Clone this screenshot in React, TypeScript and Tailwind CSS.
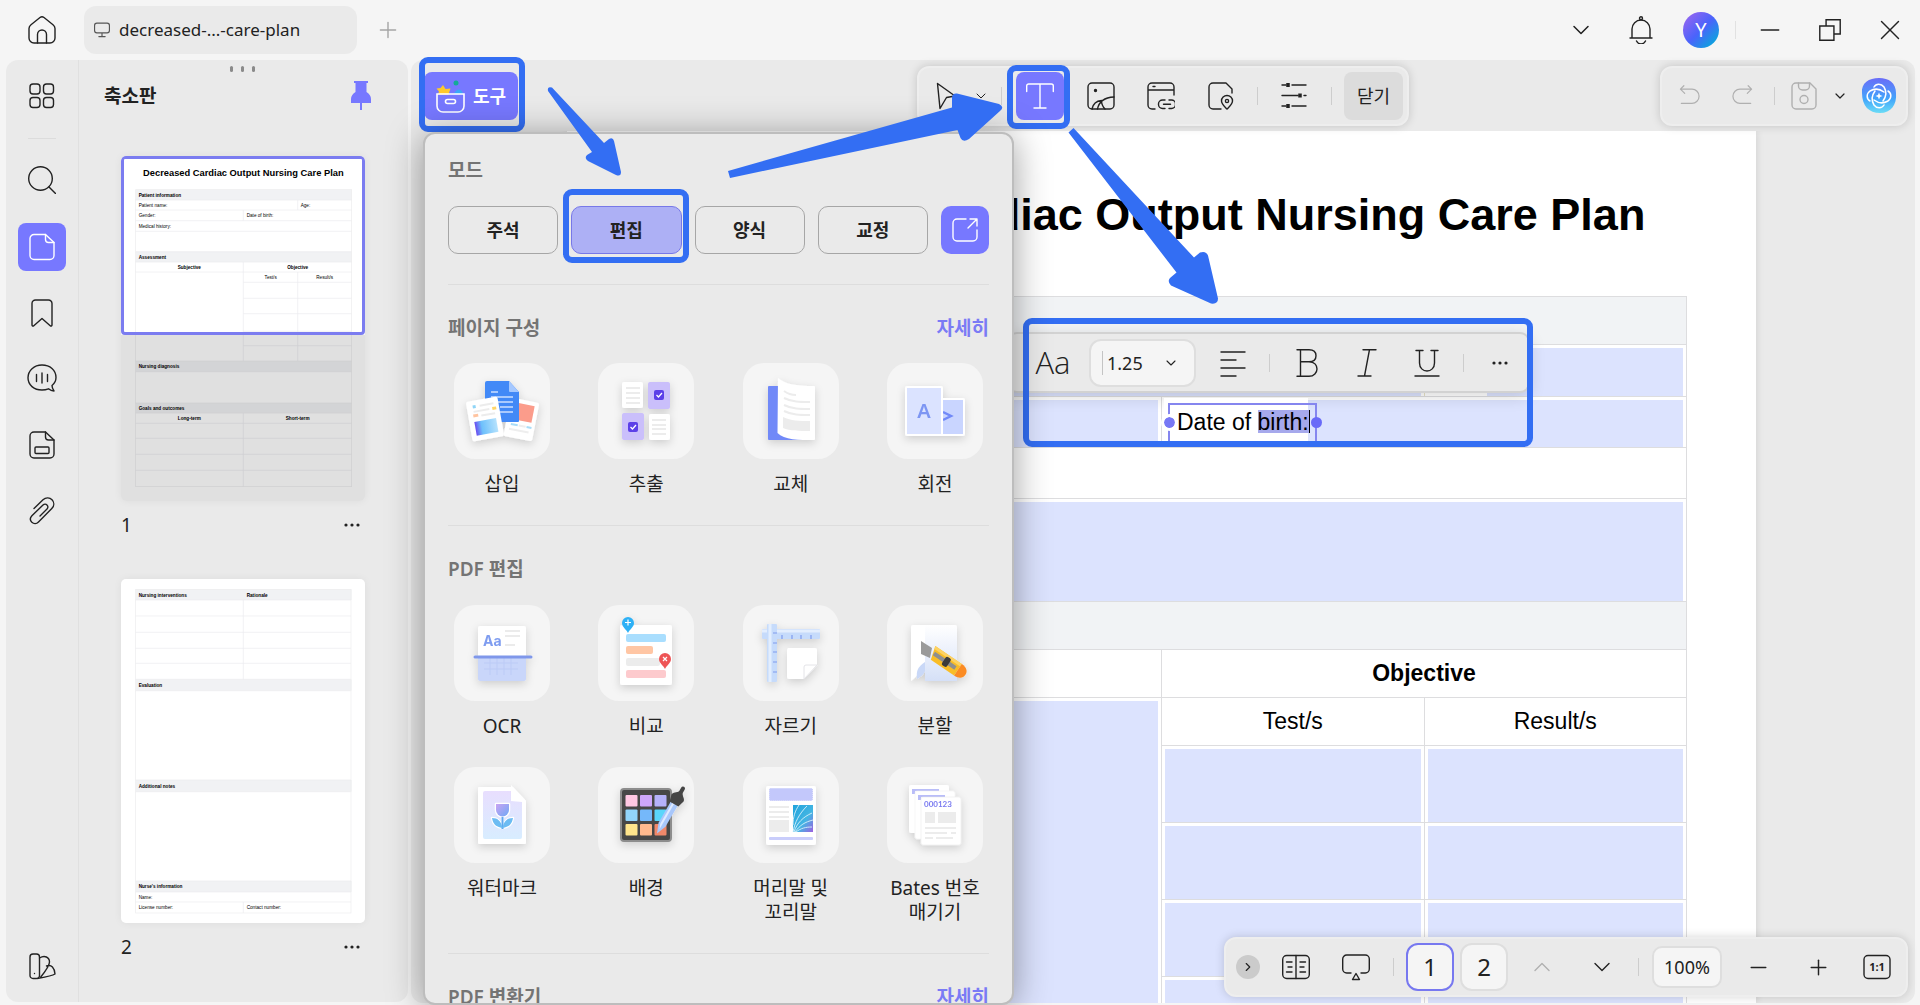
import React from 'react';
import { ChevronDown, ChevronRight, ChevronUp, Minus, Plus, X } from 'lucide-react';

const Icon = ({ size = 28, children, className = '' }: { size?: number; children: React.ReactNode; className?: string }) => (
  <svg
    width={size}
    height={size}
    viewBox="0 0 28 28"
    fill="none"
    stroke="currentColor"
    strokeWidth="1.4"
    strokeLinecap="round"
    strokeLinejoin="round"
    className={`shrink-0 ${className}`}
    aria-hidden="true"
  >
    {children}
  </svg>
);

const Dots = () => (
  <svg width="16" height="4" viewBox="0 0 16 4" fill="currentColor" aria-hidden="true">
    <circle cx="2" cy="2" r="1.6" />
    <circle cx="8" cy="2" r="1.6" />
    <circle cx="14" cy="2" r="1.6" />
  </svg>
);

const Divider = ({ className = '' }: { className?: string }) => (
  <span className={`flex shrink-0 justify-center ${className}`}>
    <span className="h-[18px] w-px bg-[#cdcdcd]" />
  </span>
);

// Highlight frame drawn round a control
const Frame = ({ className }: { className: string }) => (
  <span className={`pointer-events-none absolute rounded-[9px] border-[6px] border-[#336ef3] ${className}`} />
);

const railIcons = [
  {
    label: 'Pages',
    active: true,
    icon: (
      <>
        <path d="M17.5 1.5H6a4 4 0 0 0-4 4v17a4 4 0 0 0 4 4h16a4 4 0 0 0 4-4V9.5L17.5 1.5z" />
        <path d="M17.5 1.5v5a3 3 0 0 0 3 3H26" />
      </>
    ),
  },
  { label: 'Bookmarks', icon: <path d="M4 4.5a3.5 3.5 0 0 1 3.5-3.500h13A3.500 3.500 0 0 1 24 4.500V26c0 1-1 1.400-1.800.700L14 19.500l-8.200 7.200C5 27.400 4 27 4 26z" /> },
  {
    label: 'Comments',
    icon: (
      <>
        <path d="M24 20.500C27 18 28 15.500 28 12.500 28 5 22 0 14 0S0 5.500 0 12.800 6 25 14 25c2.500 0 4.500-.4 6.500-1.200 1.500 1.300 3.500 2.200 5.500 2.200-1-1.500-2-3.500-2-5.500z" />
        <path d="M8.500 9.500v7M14 8v10M19.500 9.500v7" />
      </>
    ),
  },
  {
    label: 'Fields',
    icon: (
      <>
        <path d="M17.500 1H6a4 4 0 0 0-4 4v18a4 4 0 0 0 4 4h16a4 4 0 0 0 4-4V9L17.500 1z" />
        <path d="M17.500 1v5a3 3 0 0 0 3 3H26" />
        <rect x="7" y="16" width="14" height="6.500" rx="1" />
      </>
    ),
  },
  {
    label: 'Attachments',
    icon: <path d="M6 11.500 15 2.800c3-2.800 6.800-2.300 9 0 2.300 2.400 2.500 6-.2 8.800L10.500 25c-2 2-4.800 2-6.600.3-1.900-1.900-1.900-4.600 0-6.600L15 8c1.200-1.200 3-1.200 4 0 1.200 1.100 1.200 2.800 0 4l-7 7" />,
  },
];

const modes = ['주석', '편집', '양식', '교정'];

/* ---- page thumbnails ---- */

const lineColor = '#ececee';

const ThumbOne = () => (
  <svg viewBox="0 0 732 1035" className="block w-full" fontFamily="Liberation Sans, sans-serif" fontSize="14" role="img" aria-label="Page 1">
    <rect width="732" height="1035" fill="#fff" />
    <text x="367" y="60" fontSize="28" fontWeight="700" textAnchor="middle">Decreased Cardiac Output Nursing Care Plan</text>
    {[[101, 31], [287, 31], [615, 32], [741, 30]].map(([y, h]) => (
      <rect key={y} x="44" y={y} width="648" height={h} fill="#f1f2f4" />
    ))}
    <g stroke={lineColor} strokeWidth="2" fill="none">
      <rect x="44" y="101" width="648" height="891" />
      <path d="M44 132h648M44 162h648M44 194h648M44 226h648M44 287h648M44 318h648M44 348h648M367 379h325M367 427h325M367 473h325M367 526h325M367 569h325M44 615h648M44 647h648M44 741h648M44 771h648M44 802h648M44 847h648M44 895h648M44 943h648" />
      <path d="M530 132v30M367 162v32M367 318v297M530 348v267M367 771v221" />
    </g>
    <g fontWeight="700">
      <text x="53" y="122">Patient information</text>
      <text x="53" y="309">Assessment</text>
      <text x="205" y="339" textAnchor="middle">Subjective</text>
      <text x="530" y="339" textAnchor="middle">Objective</text>
      <text x="53" y="636">Nursing diagnosis</text>
      <text x="53" y="761">Goals and outcomes</text>
      <text x="205" y="791" textAnchor="middle">Long-term</text>
      <text x="530" y="791" textAnchor="middle">Short-term</text>
    </g>
    <text x="53" y="152">Patient name:</text>
    <text x="539" y="152">Age:</text>
    <text x="53" y="184">Gender:</text>
    <text x="377" y="184">Date of birth:</text>
    <text x="53" y="215">Medical history:</text>
    <text x="449" y="368" textAnchor="middle">Test/s</text>
    <text x="611" y="368" textAnchor="middle">Result/s</text>
    <rect y="536" width="732" height="499" fill="#000" fillOpacity="0.12" />
  </svg>
);

const ThumbTwo = () => (
  <svg viewBox="0 0 732 1033" className="block w-full" fontFamily="Liberation Sans, sans-serif" fontSize="14" role="img" aria-label="Page 2">
    <rect width="732" height="1033" fill="#fff" />
    {[[31, 32], [301, 34], [603, 35], [906, 33]].map(([y, h]) => (
      <rect key={y} x="44" y={y} width="648" height={h} fill="#f1f2f4" />
    ))}
    <g stroke={lineColor} strokeWidth="2" fill="none">
      <rect x="44" y="31" width="646" height="971" />
      <path d="M44 63h646M44 111h646M44 160h646M44 208h646M44 253h646M44 301h646M44 335h646M44 603h646M44 638h646M44 906h646M44 939h646M44 969h646" />
      <path d="M367 63v238M367 969v33" />
    </g>
    <g fontWeight="700">
      <text x="53" y="53">Nursing interventions</text>
      <text x="377" y="53">Rationale</text>
      <text x="53" y="323">Evaluation</text>
      <text x="53" y="626">Additional notes</text>
      <text x="53" y="928">Nurse's information</text>
    </g>
    <text x="53" y="959">Name:</text>
    <text x="53" y="991">License number:</text>
    <text x="377" y="991">Contact number:</text>
  </svg>
);

/* ---- tool tile drawings, all on a 96 x 96 tile ---- */

const InsertArt = () => (
  <>
    <g transform="rotate(11 68 56)">
      <rect x="53" y="37" width="29" height="39" rx="2" fill="#fff" />
      <rect x="58" y="41" width="20" height="17" fill="#fb9c8b" />
      <path d="M58 63h7M74 63h5" stroke="#a8dcf8" strokeWidth="2" />
      <path d="M66 63h7M57 68h20" stroke="#eee" strokeWidth="2" />
    </g>
    <path d="M33 18h22l10 11v29a1 1 0 0 1-1 1H32a1 1 0 0 1-1-1V20a2 2 0 0 1 2-2z" fill="#4289f7" />
    <path d="M55 18l10 11H56a1 1 0 0 1-1-1z" fill="#a5c8ff" />
    <path d="M37 29h7M37 34h22M37 39h22M46 44h13M46 49h13" stroke="#a9c9fd" strokeWidth="2" />
    <g transform="rotate(-10 31 56)">
      <rect x="15" y="36" width="32" height="40" rx="2" fill="#fff" />
      <path d="M21 42h3" stroke="#8fd5f7" strokeWidth="3" />
      <path d="M28 42h14M21 47h16M28 52h14" stroke="#ececec" strokeWidth="2" />
      <path d="M40 47h4" stroke="#ffd669" strokeWidth="3" />
      <path d="M20 51h5" stroke="#ffc4a0" strokeWidth="3" />
      <rect x="20" y="57" width="22" height="14" fill="url(#gSky)" />
    </g>
  </>
);

const ExtractArt = () => (
  <>
    <rect x="24" y="19" width="21" height="26" rx="2" fill="#fff" />
    <rect x="51" y="51" width="21" height="26" rx="2" fill="#fff" />
    <rect x="50" y="19" width="22" height="27" rx="2" fill="#cabffb" />
    <rect x="24" y="50" width="22" height="27" rx="2" fill="#cabffb" />
    <path d="M28 25h14M28 30h14M28 35h14M28 40h14M54 57h14M54 62h14M54 66h14M54 71h14" stroke="#ececec" strokeWidth="2" />
    <rect x="56" y="27" width="10" height="10" rx="2" fill="#5b3fe8" />
    <rect x="30" y="59" width="10" height="10" rx="2" fill="#5b3fe8" />
    <path d="M58.500 32l2 2 3.500-4M32.500 64l2 2 3.500-4" stroke="#fff" strokeWidth="1.300" fill="none" />
  </>
);

const ReplaceArt = () => (
  <>
    <rect x="25" y="23" width="36" height="54" rx="1" fill="#7189f8" />
    <path d="M35 15c7 6 17 8 36 8a1 1 0 0 1 1 1v52a1 1 0 0 1-1 1c-15 0-30 0-36.500-7z" fill="#fff" />
    <path d="M41 28c4 3 8 4 12 4M41 35c8 4 16 4 26 4M41 42c8 4 16 4 26 4M41 48c8 4 16 4 26 4" stroke="#ececec" strokeWidth="2" fill="none" />
    <path d="M40 54c8 4 16 4 27 4v10c-11 0-20 0-27-3z" fill="#ececec" />
  </>
);

const RotateArt = () => (
  <>
    <rect x="45" y="36" width="32" height="36" rx="1" fill="#c9d5ff" stroke="#fff" strokeWidth="2" />
    <path d="M56 49l8 4-8 4" fill="none" stroke="#7189f8" strokeWidth="2.500" />
    <rect x="19" y="24" width="36" height="48" rx="1" fill="#dbe3ff" stroke="#fff" strokeWidth="2" />
    <text x="37" y="55" fontSize="20" fontWeight="600" textAnchor="middle" fill="#7d96f3">A</text>
  </>
);

const OcrArt = () => (
  <>
    <rect x="24" y="21" width="48" height="34" rx="2" fill="#fff" />
    <text x="29" y="41" fontSize="14" fontWeight="700" fill="#7f9df0" fontFamily="Inter, sans-serif">Aa</text>
    <path d="M51 26h15M51 31h15M51 40h10" stroke="#ebebeb" strokeWidth="2" />
    <path d="M24 52h48v22a2 2 0 0 1-2 2H26a2 2 0 0 1-2-2z" fill="#c9d6fa" />
    <path d="M36 53v17M43 53v17M50 53v17M57 53v17M30 58h34M30 64h34" stroke="#bccbf6" strokeWidth="1" />
    <path d="M21 52h56" stroke="#7f97ea" strokeWidth="3" strokeLinecap="round" />
  </>
);

const CompareArt = () => (
  <>
    <rect x="22" y="20" width="52" height="60" rx="2" fill="#fff" />
    <rect x="28" y="29" width="40" height="8" rx="2" fill="#a9defe" />
    <rect x="28" y="41" width="27" height="8" rx="2" fill="#ffc6a4" />
    <rect x="28" y="53" width="34" height="8" rx="2" fill="#ececec" />
    <rect x="28" y="65" width="40" height="8" rx="2" fill="#fdcacd" />
    <path d="M30 28c-2-4-6-6-6-10a6 6 0 0 1 12 0c0 4-4 6-6 10z" fill="#2fb1f6" />
    <path d="M30 14.500v6M27 17.500h6" stroke="#fff" strokeWidth="1.200" />
    <path d="M67 64c-2-4-6-6-6-10a6 6 0 0 1 12 0c0 4-4 6-6 10z" fill="#ee5456" />
    <path d="M65 52l4 4M69 52l-4 4" stroke="#fff" strokeWidth="1.200" />
  </>
);

const CropArt = () => (
  <>
    <rect x="19" y="24" width="58" height="10" rx="1" fill="#c6dbfb" />
    <path d="M19 26h58" stroke="#e3eefe" strokeWidth="3" />
    <path d="M39 30v4M49 30v4M58 30v4M68 30v4" stroke="#7f9bee" strokeWidth="1.200" />
    <rect x="24" y="19" width="10" height="58" rx="1" fill="#c6dbfb" />
    <path d="M27 19v58" stroke="#e3eefe" strokeWidth="3" />
    <path d="M30 28h4M30 38h4M30 47h4M30 57h4M30 67h4" stroke="#7f9bee" strokeWidth="1.200" />
    <path d="M45 43h27a2 2 0 0 1 2 2v15L61 74H46a2 2 0 0 1-2-2V45z" fill="#fff" />
    <path d="M74 60L61 74V62a2 2 0 0 1 2-2z" fill="#fff" stroke="#e4e4e8" strokeWidth="1" />
  </>
);

const SplitArt = () => (
  <>
    <path d="M26 20h12v40c-3 4-6 10-14 16V22a2 2 0 0 1 2-2z" fill="#fff" />
    <path d="M38 20h30a2 2 0 0 1 2 2v54H38z" fill="url(#gPaper)" />
    <path d="M38 57c-7 5-9 8-8 17 5-3 8-6 8-9z" fill="#c9d8f7" />
    <path d="M34 36l11 7-2 10-9-4z" fill="#9a9a9a" />
    <g transform="rotate(34 61 58)">
      <path d="M41 51h32v14H45z" fill="#f9bd27" />
      <path d="M41 51h32v3H42z" fill="#fdd264" />
      <path d="M73 51c6 0 9 3 9 7s-3 7-9 7z" fill="#fb8b24" />
      <path d="M44 58h26" stroke="#8f8f8f" strokeWidth="4" />
      <rect x="56" y="53" width="6" height="10" rx="2" fill="#3a3a3a" />
    </g>
  </>
);

const WatermarkArt = () => (
  <>
    <path d="M24 21a1 1 0 0 1 1-1h34l13 14v42a1 1 0 0 1-1 1H25a1 1 0 0 1-1-1z" fill="#fff" />
    <path d="M31 24h26v10l11 1v35a2 2 0 0 1-2 2H31a2 2 0 0 1-2-2V26a2 2 0 0 1 2-2z" fill="url(#gWash)" />
    <path d="M57 18l15 16H59a2 2 0 0 1-2-2z" fill="#fff" />
    <g stroke="#fff" strokeWidth="2.500" strokeLinejoin="round">
      <path d="M48.500 50v12M38 51c6 0 9 3 10.500 10C42 60 39 57 38 51zM59 51c-6 0-9 3-10.500 10C55 60 58 57 59 51z" fill="#fff" />
      <path d="M42 37h13v6a6.500 6.500 0 0 1-13 0z" fill="#fff" />
    </g>
    <path d="M48.500 50v12" stroke="#5fa8ee" strokeWidth="2" />
    <path d="M38 51c6 0 9 3 10.500 10C42 60 39 57 38 51zM59 51c-6 0-9 3-10.500 10C55 60 58 57 59 51z" fill="#6cbcf3" />
    <path d="M42 37h13v6a6.500 6.500 0 0 1-13 0z" fill="url(#gTulip)" />
  </>
);

const swatches = [
  ['#ffc8e3', '#cda6fb', '#b5b1fa'],
  ['#92d4fb', '#74b8fa', '#5ad6fb'],
  ['#ffe58c', '#ffb98e', '#f0886a'],
];

const BackgroundArt = () => (
  <>
    <rect x="23" y="22" width="50" height="52" rx="3" fill="#464646" stroke="#8d8d8d" strokeWidth="2" />
    {swatches.map((row, r) =>
      row.map((fill, c) => <rect key={fill} x={27.5 + c * 14.5} y={28 + r * 14.5} width="12" height="11.500" rx="1" fill={fill} />)
    )}
    <g transform="rotate(30 72 44)">
      <path d="M68 36h8v24l-4 10-4-10z" fill="#a8c7fb" />
      <path d="M70 36h2v29l-2-5z" fill="#dfeaff" />
      <path d="M65 29c0-3 4-4 5-7v-4a2 2 0 0 1 4 0v4c1 3 5 4 5 7l-2 7H67z" fill="#444" />
    </g>
  </>
);

const HeaderFooterArt = () => (
  <>
    <rect x="23" y="19" width="50" height="59" rx="2" fill="#fff" />
    <rect x="26.500" y="21.500" width="43" height="12" rx="1" fill="#c3c8fb" stroke="#a7adf5" strokeWidth="0.500" strokeDasharray="1 1" />
    <path d="M26 40h20M26 45h20M26 50h20" stroke="#ececec" strokeWidth="2" />
    <rect x="26" y="53" width="20" height="12" fill="#ececec" />
    <rect x="50" y="38" width="20" height="27" fill="url(#gFeather)" />
    <path d="M50 65c2-10 6-18 14-26M51 65c3-9 9-15 18-19M52 65c5-7 10-10 18-12M53 65c5-4 10-5 16-5M50 58c0-8 2-14 6-20" stroke="#d8f1fb" strokeWidth="0.900" fill="none" />
    <rect x="26" y="70" width="44" height="3" rx="1" fill="#c9cdfb" />
  </>
);

const BatesArt = () => (
  <>
    <rect x="22" y="18" width="40" height="48" rx="2" fill="#fff" />
    <path d="M25 27v-5h27v2H28v3z" fill="#b9bdf8" />
    <rect x="28" y="24" width="40" height="48" rx="2" fill="#fff" stroke="#ededed" strokeWidth="0.500" />
    <path d="M31 33v-5h27v2H34v3z" fill="#b9bdf8" />
    <rect x="34" y="30" width="40" height="48" rx="2" fill="#fff" stroke="#e6e6e6" strokeWidth="0.500" />
    <text x="37" y="40" fontSize="8" fontWeight="700" fill="#7a7bf0" fontFamily="Lato, sans-serif">000123</text>
    <rect x="38" y="45" width="10" height="11" fill="#ececec" />
    <rect x="51" y="45" width="18" height="11" fill="#ececec" />
    <path d="M38 61h31M38 66h22M64 66h5M38 71h8M49 71h17" stroke="#ececec" strokeWidth="2" />
  </>
);

interface Tool {
  label: string;
  art: React.ReactNode;
}

const pageTools: Tool[] = [
  { label: '삽입', art: <InsertArt /> },
  { label: '추출', art: <ExtractArt /> },
  { label: '교체', art: <ReplaceArt /> },
  { label: '회전', art: <RotateArt /> },
];

const editTools: Tool[] = [
  { label: 'OCR', art: <OcrArt /> },
  { label: '비교', art: <CompareArt /> },
  { label: '자르기', art: <CropArt /> },
  { label: '분할', art: <SplitArt /> },
  { label: '워터마크', art: <WatermarkArt /> },
  { label: '배경', art: <BackgroundArt /> },
  { label: '머리말 및 꼬리말', art: <HeaderFooterArt /> },
  { label: 'Bates 번호 매기기', art: <BatesArt /> },
];

const ToolGrid = ({ tools }: { tools: Tool[] }) => (
  <div className="grid grid-cols-[repeat(4,96px)] justify-between gap-y-[18px] px-[6px]">
    {tools.map((tool) => (
      <button key={tool.label} type="button" className="flex min-h-[144px] flex-col items-center gap-[13px]">
        <svg width="96" height="96" viewBox="0 0 96 96" className="shrink-0 rounded-[21px] bg-[#f5f5f5]" aria-hidden="true">
          <g filter="url(#soft)">{tool.art}</g>
        </svg>
        <span className="text-[19px] leading-[24px] break-keep text-[#222]">{tool.label}</span>
      </button>
    ))}
  </div>
);

const SectionTitle = ({ title, more }: { title: string; more?: boolean }) => (
  <div className="flex h-[24px] items-center justify-between text-[19px] font-semibold text-[#747474]">
    <h2>{title}</h2>
    {more && <a href="#more" className="text-[#7a7bf5]">자세히</a>}
  </div>
);

const ToolMenu = () => (
  <aside className="absolute top-[132px] left-[423px] z-20 h-[calc(100vh-132px)] w-[591px] overflow-hidden rounded-[12px] border-2 border-[#bdbdbd] bg-[#eaeaea] px-[23px] pt-[24px] shadow-[0_4px_36px_rgba(0,0,0,0.38)]">
    <SectionTitle title="모드" />
    <div className="mt-[24px] flex gap-[13px]">
      {modes.map((mode, i) => (
        <span key={mode} className="relative flex flex-1">
          <button
            type="button"
            className={`h-[48px] flex-1 rounded-[10px] border text-[18px] font-semibold text-[#222] ${
              i === 1 ? 'border-[#7778e8] bg-[#adb0f5]' : 'border-[#a6a6a6]'
            }`}
          >
            {mode}
          </button>
          {i === 1 && <Frame className="-top-[17px] -right-[7px] -bottom-[9px] -left-[8px]" />}
        </span>
      ))}
      <button type="button" aria-label="Open" className="flex h-[48px] w-[48px] items-center justify-center rounded-[10px] bg-[#7778ff] text-white">
        <Icon>
          <path d="M15 3H6a4 4 0 0 0-4 4v14a4 4 0 0 0 4 4h16a4 4 0 0 0 4-4v-7M19 3h7v7M26 3l-9 9" />
        </Icon>
      </button>
    </div>
    <hr className="mt-[30px] border-[#dddddd]" />
    <div className="mt-[31px]">
      <SectionTitle title="페이지 구성" more />
      <div className="mt-[23px]">
        <ToolGrid tools={pageTools} />
      </div>
    </div>
    <hr className="mt-[18px] border-[#dddddd]" />
    <div className="mt-[31px]">
      <SectionTitle title="PDF 편집" />
      <div className="mt-[24px]">
        <ToolGrid tools={editTools} />
      </div>
    </div>
    <hr className="mt-[29px] border-[#dddddd]" />
    <div className="mt-[31px]">
      <SectionTitle title="PDF 변환기" more />
    </div>
  </aside>
);

/* ---- document ---- */

const cell = 'border-r border-b border-[#dddddf]';
const field = 'border-r border-b border-[#dddddf] bg-[#dce3fe] shadow-[inset_3px_3px_0_#fff,inset_-3px_0_0_#fff]';

const CarePlanTable = () => (
  <table className="mx-[69px] w-[1051px] table-fixed border-separate border-spacing-0 border-t border-l border-[#dddddf] text-[23px]">
    <colgroup>
      <col className="w-1/2" />
      <col className="w-1/4" />
      <col className="w-1/4" />
    </colgroup>
    <tbody>
      <tr className="h-[48px]"><td colSpan={3} className={`${cell} bg-[#f1f3f5]`} /></tr>
      <tr className="h-[52px]"><td colSpan={2} className={field} /><td className={field} /></tr>
      <tr className="h-[51px]"><td className={field} /><td colSpan={2} className={field} /></tr>
      <tr className="h-[51px]"><td colSpan={3} className={cell} /></tr>
      <tr className="h-[103px]"><td colSpan={3} className={field} /></tr>
      <tr className="h-[48px]"><td colSpan={3} className={`${cell} bg-[#f1f3f5]`} /></tr>
      <tr className="h-[48px]">
        <td className={cell} />
        <th colSpan={2} className={cell}>Objective</th>
      </tr>
      <tr className="h-[48px] text-center">
        <td rowSpan={6} className={field} />
        <td className={cell}>Test/s</td>
        <td className={cell}>Result/s</td>
      </tr>
      {[1, 2, 3, 4, 5].map((n) => (
        <tr key={n} className="h-[77px]"><td className={field} /><td className={field} /></tr>
      ))}
    </tbody>
  </table>
);

const DateOfBirth = () => (
  <div className="absolute top-[267px] left-[597px] h-[48px] w-[144px] bg-white">
    <div className="absolute top-[5px] left-[4px] h-[43px] w-[149px] border-2 border-b-0 border-[#8586ef]" />
    <p className="absolute top-[12px] left-[13px] text-[23px] leading-[24px] whitespace-nowrap">
      Date of <mark className="inline-block h-[23px] border-r border-black bg-[#a6a9ec] text-black">birth:</mark>
    </p>
    <span className="absolute top-[19px] h-[11px] w-[11px] rounded-full bg-[#7778f5] outline-3 outline-white" />
    <span className="absolute top-[19px] left-[147px] h-[11px] w-[11px] rounded-full bg-[#696af8]" />
  </div>
);

const FormatBar = () => (
  <div className="absolute top-[201px] left-[440px] flex h-[61px] items-center rounded-[10px] border-2 border-[#d2d2d2] bg-[#eaeaea] pl-[24px] text-[#222] shadow-[0_4px_16px_rgba(0,0,0,0.15)]">
    <button type="button" className="w-[40px] font-['Open_Sans',sans-serif] text-[31px] font-light">Aa</button>
    <label className="ml-[16px] flex h-[48px] w-[107px] items-center rounded-[12px] border-2 border-[#dedede] bg-[#f5f5f5]">
      <input aria-label="Font size" defaultValue="1.25" className="ml-[11px] w-[52px] border-l border-[#c4c4c4] bg-transparent pl-[4px] font-['Noto_Sans',sans-serif] text-[18px] leading-[16px]" />
      <ChevronDown size={16} strokeWidth={1.600} className="ml-[9px]" />
    </label>
    <button type="button" aria-label="Align left" className="flex w-[73px] justify-center">
      <Icon className="mx-1"><path d="M2 3h24M2 11h15M2 19h24M2 27h15" /></Icon>
    </button>
    <Divider />
    <button type="button" aria-label="Bold" className="flex w-[74px] justify-center">
      <Icon><path d="M4 .7h12c5 0 7 3 7 6s-2 6-7 6c6 0 8 4 8 7.300s-3 7.300-8 7.300H4M7.500.7v26.500M7.500 12.700H16" /></Icon>
    </button>
    <button type="button" aria-label="Italic" className="flex w-[46px] justify-center">
      <Icon><path d="M10 .7h13M5 27h13M16.500.7L11.500 27" /></Icon>
    </button>
    <button type="button" aria-label="Underline" className="flex w-[73px] justify-center">
      <Icon><path d="M3 1.500h7M18 1.500h7M6.500 1.500V14c0 5 3.500 8 7.500 8s7.500-3 7.500-8V1.500M2 27h24" /></Icon>
    </button>
    <Divider />
    <button type="button" aria-label="More" className="flex w-[64px] justify-center pl-[8px]"><Dots /></button>
  </div>
);

/* ---- toolbars ---- */

const bar = 'flex items-center rounded-[12px] border-2 border-[#eeeeee] bg-[#eaeaea] text-[#222] shadow-[0_0_10px_rgba(0,0,0,0.17)]';

const ToolsButton = () => (
  <div className="relative ml-[13px] h-[48px] w-[94px]">
    <button type="button" className="flex h-full w-full items-center justify-center gap-[8px] rounded-[8px] bg-[#7778ff] text-[18px] font-semibold text-white">
      <svg width="29" height="34" viewBox="0 0 29 34" fill="none" aria-hidden="true">
        <circle cx="20" cy="4" r="2.500" fill="#13ab98" />
        <path d="M7 6l2.500 4 5-.5-2 6H2l1-3-2.500-3 4-.500z" fill="#fdc92c" />
        <path d="M18 15c2-6 8-6 9 0z" fill="#3ba8f8" />
        <path d="M2 15h26v12a6 6 0 0 1-6 6H7a6 6 0 0 1-6-6V15z" stroke="#fff" strokeWidth="1.600" />
        <rect x="9.500" y="20.500" width="10" height="4" rx="2" stroke="#fff" strokeWidth="1.600" />
      </svg>
      도구
    </button>
    <Frame className="-top-[15px] -right-[7px] -bottom-[12px] -left-[5px]" />
  </div>
);

const EditBar = () => (
  <div className={`${bar} h-[60px]`}>
    <button type="button" aria-label="Select" className="flex w-[54px] justify-center">
      <Icon><path d="M5.500 1.500 23 14l-8.500 1.500L8 26.500z" /></Icon>
    </button>
    <button type="button" aria-label="Selection options" className="flex w-[16px] justify-center"><ChevronDown size={16} strokeWidth={1.500} className="shrink-0" /></button>
    <Divider className="w-[25px]" />
    <span className="relative mx-[2px] h-[48px] w-[48px]">
      <button type="button" aria-label="Add text" className="flex h-full w-full items-center justify-center rounded-[8px] bg-[#7778ff] text-white">
        <Icon><path d="M.7 9.500V4a2 2 0 0 1 2-2h22.600a2 2 0 0 1 2 2v5.500M14 2v24M8 26h12" /></Icon>
      </button>
      <Frame className="-top-[7px] -right-[6px] -bottom-[9px] -left-[9px]" />
    </span>
    <button type="button" aria-label="Image" className="ml-[5px] flex w-[60px] justify-center">
      <Icon>
        <rect x="1" y="1" width="26" height="26" rx="4" />
        <path d="M5 27c1-5 4-8 9.500-8.500M10.500 27C12 19.500 17 15.500 27 15M14.500 18.500c0 3 1 6 3.500 8.500" />
        <circle cx="8.500" cy="8.500" r="1" fill="currentColor" />
      </Icon>
    </button>
    <button type="button" aria-label="Link" className="flex w-[60px] justify-center">
      <Icon>
        <path d="M8 27H5a4 4 0 0 1-4-4V5a4 4 0 0 1 4-4h18a4 4 0 0 1 4 4v8M1 8h26M6 4.500h2" />
        <path d="M18 18h-2.500a4 4 0 0 0-4 4v.500a4 4 0 0 0 4 4H18M22 18h2.500a4 4 0 0 1 4 4v.500a4 4 0 0 1-4 4H22M16.500 22.200h7" />
      </Icon>
    </button>
    <button type="button" aria-label="Place" className="flex w-[60px] justify-center">
      <Icon>
        <path d="M14 27H6a4 4 0 0 1-4-4V5a4 4 0 0 1 4-4h13l6 6v4" />
        <path d="M20 27c-3-3-5.500-5-5.500-8a5.500 5.500 0 0 1 11 0c0 3-2.500 5-5.500 8z" />
        <circle cx="20" cy="19" r="1.600" />
      </Icon>
    </button>
    <Divider className="w-[13px]" />
    <button type="button" aria-label="Settings" className="flex w-[60px] justify-center">
      <Icon>
        <path d="M2 3h4M12 3h14M2 13.500h16M24 13.500h2M2 24h4M12 24h14" />
        <path d="M8 1v4M20 11.500v4M8 22v4" strokeWidth="3.500" strokeLinecap="butt" />
      </Icon>
    </button>
    <Divider className="w-[14px]" />
    <button type="button" className="mr-[4px] ml-[6px] h-[48px] w-[59px] rounded-[8px] bg-[#dcdcdc] text-[18px]">닫기</button>
  </div>
);

const FileBar = () => (
  <div className={`${bar} mr-[7px] ml-auto h-[60px]`}>
    <button type="button" aria-label="Undo" className="flex w-[54px] justify-center text-[#b0b0b0]">
      <Icon size={24}><path d="M4 6h13.500a7.500 7.500 0 0 1 0 16.500H5M8 2 4 6l5 5" /></Icon>
    </button>
    <button type="button" aria-label="Redo" className="flex w-[54px] justify-center text-[#b0b0b0]">
      <Icon size={24}><path d="M24 6H10.500a7.500 7.500 0 0 0 0 16.500H23M20 2l4 4-5 5" /></Icon>
    </button>
    <Divider className="w-[8px]" />
    <button type="button" aria-label="Save" className="flex w-[52px] justify-center text-[#b0b0b0]">
      <Icon>
        <path d="M20 1H6a4 4 0 0 0-4 4v18a4 4 0 0 0 4 4h16a4 4 0 0 0 4-4V7z" />
        <path d="M8.500 1v3a4 4 0 0 0 4 4h3a4 4 0 0 0 4-4V1" />
        <circle cx="14" cy="17.500" r="4" />
      </Icon>
    </button>
    <button type="button" aria-label="Save options" className="flex w-[20px] justify-center"><ChevronDown size={16} strokeWidth={1.800} /></button>
    <button type="button" aria-label="Assistant" className="mr-[9px] ml-[11px]">
      <svg width="36" height="36" viewBox="0 0 36 36" fill="none" aria-hidden="true">
        <path d="M18 0c10 0 17 5 17 15 1 12-5 20-16 20S1 28 1 15C0 5 8 0 18 0z" fill="url(#gAi)" />
        <g stroke="#fff" strokeWidth="1.500" strokeLinecap="round">
          <path d="M13 9c2-3.500 7-4 10 0 3 5 2 10-1 14" />
          <path d="M27 13c3.500 2 4 7 0 10-5 3-10 2-14-1" />
          <path d="M23 27c-2 3.500-7 4-10 0-3-5-2-10 1-14" />
          <path d="M9 23c-3.500-2-4-7 0-10 5-3 10-2 14 1" />
        </g>
        <path d="M18 14.500l1 2.500 2.500 1-2.500 1-1 2.500-1-2.500-2.500-1 2.500-1z" fill="#fff" />
      </svg>
    </button>
  </div>
);

const PageBar = () => (
  <nav className={`${bar} absolute right-[7px] bottom-[6px] z-10 h-[60px] font-['Noto_Sans',sans-serif]`}>
    <button type="button" aria-label="Collapse" className="ml-[10px] flex h-[24px] w-[24px] items-center justify-center rounded-full bg-[#cbcbcb]"><ChevronRight size={14} strokeWidth={2} /></button>
    <button type="button" aria-label="Two pages" className="ml-[6px] flex w-[60px] justify-center">
      <Icon>
        <rect x="0.700" y="2.500" width="26.600" height="23" rx="4" />
        <path d="M14 2.500v23M4.500 9H10M6 14h4M4.500 19H10M18 9h5.500M18 14h4M18 19h5.500" />
      </Icon>
    </button>
    <button type="button" aria-label="Present" className="flex w-[60px] justify-center">
      <Icon>
        <path d="M9 20H4.700a4 4 0 0 1-4-4V6a4 4 0 0 1 4-4h18.600a4 4 0 0 1 4 4v10a4 4 0 0 1-4 4H19" />
        <path d="M14 20.500l3.500 6h-7z" />
      </Icon>
    </button>
    <Divider className="w-[14px]" />
    <button type="button" className="ml-[6px] h-[48px] w-[48px] rounded-[12px] border-2 border-[#7778f0] bg-[#f5f5f5] text-[24px]">1</button>
    <button type="button" className="ml-[6px] h-[48px] w-[48px] rounded-[12px] border-2 border-[#dedede] bg-[#f5f5f5] text-[24px]">2</button>
    <button type="button" aria-label="Previous page" className="ml-[4px] flex w-[60px] justify-center text-[#b0b0b0]"><ChevronUp size={28} strokeWidth={1.200} /></button>
    <button type="button" aria-label="Next page" className="flex w-[60px] justify-center"><ChevronDown size={28} strokeWidth={1.200} /></button>
    <Divider className="w-[12px]" />
    <button type="button" className="ml-[8px] h-[42px] w-[70px] rounded-[10px] border-2 border-[#dedede] bg-[#f5f5f5] text-[18px]">100%</button>
    <button type="button" aria-label="Zoom out" className="ml-[6px] flex w-[60px] justify-center"><Minus size={25} strokeWidth={1.400} /></button>
    <button type="button" aria-label="Zoom in" className="flex w-[60px] justify-center"><Plus size={25} strokeWidth={1.400} /></button>
    <button type="button" aria-label="Actual size" className="flex w-[58px] justify-center">
      <Icon>
        <rect x="1" y="2.500" width="26" height="23" rx="4" />
        <text x="14" y="18" fontSize="11" fontWeight="700" textAnchor="middle" fill="currentColor" stroke="none">1:1</text>
      </Icon>
    </button>
  </nav>
);

const TitleBar = () => (
  <header className="flex h-[60px] shrink-0 items-center pl-[28px] text-[#222]">
    <button type="button" aria-label="Home">
      <Icon>
        <path d="M1 12.500c0-1.600.7-2.800 2-3.800L12 1.500c1.300-1 2.700-1 4 0l9 7.200c1.300 1 2 2.200 2 3.800V22a5 5 0 0 1-5 5H6a5 5 0 0 1-5-5z" />
        <path d="M9.500 27v-8.500a4.500 4.500 0 0 1 9 0V27" />
      </Icon>
    </button>
    <button type="button" className="ml-[28px] flex h-[48px] w-[273px] items-center gap-[9px] rounded-[12px] bg-[#eaeaea] px-[10px] text-[17px]">
      <Icon size={16} className="text-[#555]">
        <path strokeWidth="2" d="M5 2h18a4 4 0 0 1 4 4v9a4 4 0 0 1-4 4H5a4 4 0 0 1-4-4V6a4 4 0 0 1 4-4zM14 19v6M8.500 25.500h11" />
      </Icon>
      decreased-...-care-plan
    </button>
    <button type="button" aria-label="New tab" className="ml-[18px] text-[#a5a5a5]"><Plus size={26} strokeWidth={1.300} /></button>
    <div className="ml-auto flex items-center">
      <button type="button" aria-label="Tab list" className="flex w-[60px] justify-center"><ChevronDown size={28} strokeWidth={1.300} /></button>
      <button type="button" aria-label="Notifications" className="flex w-[60px] justify-center">
        <Icon>
          <path d="M3 22h22M5 22V13a9 9 0 0 1 18 0v9M9.500 25c1 2 2.700 3 4.500 3s3.500-1 4.500-3" />
          <circle cx="14" cy="2.300" r="1.500" />
        </Icon>
      </button>
      <button type="button" aria-label="Account" className="mx-[12px] h-[36px] w-[36px] rounded-full bg-linear-[135deg,#a566ee_0%,#4a63fb_50%,#00b0d8_95%] text-[20px] text-white">Y</button>
      <Divider className="w-[9px] opacity-50" />
      <button type="button" aria-label="Minimize" className="flex w-[60px] justify-center"><Minus size={30} strokeWidth={1.100} /></button>
      <button type="button" aria-label="Restore" className="flex w-[60px] justify-center">
        <Icon size={22}>
          <path strokeWidth="1.800" strokeLinejoin="miter" d="M1 9h18v18H1zM9 9V1h18v18h-8" />
        </Icon>
      </button>
      <button type="button" aria-label="Close" className="flex w-[60px] justify-center"><X size={34} strokeWidth={1} /></button>
    </div>
  </header>
);

const SidePanel = () => (
  <div className="mb-px flex w-[402px] shrink-0 overflow-hidden rounded-[12px] bg-[#eaeaea] text-[#222]">
    <nav className="flex w-[73px] shrink-0 flex-col items-center border-r border-[#e0e0e0] pt-[22px] pb-[22px]">
      <button type="button" aria-label="Views">
        <Icon>
          <rect x="2" y="2" width="10" height="10" rx="3" />
          <rect x="15.500" y="2" width="10" height="10" rx="3" />
          <rect x="2" y="15.500" width="10" height="10" rx="3" />
          <rect x="15.500" y="15.500" width="10" height="10" rx="3" />
        </Icon>
      </button>
      <hr className="mt-[28px] w-[28px] border-[#dcdcdc]" />
      <button type="button" aria-label="Search" className="mt-[27px] mb-[20px]">
        <Icon>
          <circle cx="12.500" cy="12.500" r="11.800" />
          <path d="M21 21l6.500 6.500" />
        </Icon>
      </button>
      {railIcons.map((item) => (
        <button
          key={item.label}
          type="button"
          aria-label={item.label}
          className={`mt-[9px] mb-[9px] flex h-[48px] w-[48px] items-center justify-center rounded-[8px] ${item.active ? 'bg-[#7778ff] text-white' : ''}`}
        >
          <Icon className="overflow-visible">{item.icon}</Icon>
        </button>
      ))}
      <button type="button" aria-label="Themes" className="mt-auto">
        <Icon>
          <path d="M5 2h3.500a3 3 0 0 1 3 3v18.500a3 3 0 0 1-3 3H5a3 3 0 0 1-3-3V5a3 3 0 0 1 3-3zM6.500 21.500v.1" />
          <path d="M11.500 6c5-3 10-1 10 4 0 3-3 8-9.500 16M18.500 14c5-2 8 2 8.500 8-3 2-9 3-17.500 4.500" />
        </Icon>
      </button>
    </nav>
    <section className="relative flex-1 pt-[21px]">
      <span className="absolute top-[6px] left-[151px] flex gap-[8px]">
        <i className="h-[6px] w-[3px] rounded-full bg-[#8a8a8a]" />
        <i className="h-[6px] w-[3px] rounded-full bg-[#8a8a8a]" />
        <i className="h-[6px] w-[3px] rounded-full bg-[#8a8a8a]" />
      </span>
      <div className="flex h-[30px] items-center justify-between pr-[37px] pl-[25px]">
        <h2 className="text-[19px] font-semibold">축소판</h2>
        <button type="button" aria-label="Pin" className="text-[#7778ff]">
          <svg width="20" height="30" viewBox="0 0 20 30" fill="currentColor" aria-hidden="true">
            <path d="M3 0h14v2h-1.500v9C18.500 13 20 15 20 18v4H11v7H9v-7H0v-4c0-3 1.500-5 4.500-7V2H3z" />
          </svg>
        </button>
      </div>
      <div className="mt-[45px] mr-[43px] ml-[42px]">
        <div className="relative overflow-hidden rounded-[5px] shadow-[0_0_8px_rgba(0,0,0,0.06)]">
          <ThumbOne />
          <span className="absolute inset-x-0 top-0 h-[179px] rounded-[4px] border-3 border-[#7b7cf0]" />
        </div>
        <div className="mt-[10px] flex h-[28px] items-center justify-between pr-[5px] text-[19px]">
          1 <button type="button" aria-label="Page 1 options"><Dots /></button>
        </div>
        <div className="mt-[40px] overflow-hidden rounded-[5px] shadow-[0_0_8px_rgba(0,0,0,0.06)]">
          <ThumbTwo />
        </div>
        <div className="mt-[10px] flex h-[28px] items-center justify-between pr-[5px] text-[19px]">
          2 <button type="button" aria-label="Page 2 options"><Dots /></button>
        </div>
      </div>
    </section>
  </div>
);

// Gradients and the drop shadow shared by the drawings
const Defs = () => (
  <svg width="0" height="0" className="absolute" aria-hidden="true">
    <defs>
      <filter id="soft" x="-20%" y="-20%" width="140%" height="150%">
        <feDropShadow dx="0" dy="3" stdDeviation="4" floodColor="#000" floodOpacity="0.16" />
      </filter>
      <linearGradient id="gSky"><stop stopColor="#6a4cf0" /><stop offset="0.300" stopColor="#6dc0fb" /><stop offset="1" stopColor="#b5e2fd" /></linearGradient>
      <linearGradient id="gPaper" x2="0" y2="1"><stop stopColor="#fff" /><stop offset="1" stopColor="#d5e0f7" /></linearGradient>
      <linearGradient id="gWash" x2="0" y2="1"><stop stopColor="#e8defe" /><stop offset="1" stopColor="#d8edff" /></linearGradient>
      <linearGradient id="gTulip" x2="1" y2="1"><stop stopColor="#c9a4f3" /><stop offset="1" stopColor="#6fa8f5" /></linearGradient>
      <linearGradient id="gFeather" x2="1" y2="1"><stop stopColor="#20a3dc" /><stop offset="0.600" stopColor="#44b6e3" /><stop offset="1" stopColor="#9d5fe0" /></linearGradient>
      <linearGradient id="gAi" x2="0" y2="1"><stop stopColor="#6a6cf8" /><stop offset="0.600" stopColor="#42a5fb" /><stop offset="1" stopColor="#6bdcf6" /></linearGradient>
    </defs>
  </svg>
);

const Arrows = () => (
  <svg width="1300" height="320" viewBox="0 0 1300 320" className="pointer-events-none absolute top-0 left-0 z-30" fill="#336ef3" aria-hidden="true">
    <path d="M548 91q-1-5 4-3.500L604 143l5-4q4-2 5 2l7 31q0 5-5 3l-28-14q-4-3-1-6l5-3z" />
    <path d="M728 171 952 107.500V98q0-5 5-4.500l42 10.500q6 3 1 7l-31 28q-6 4-8.500-1L957.500 130 730 178z" />
    <path d="M1068.500 132.500l5-4.500L1194 257.500l6-5q6-2 8 3l10 43q0 6-7 5l-40-18q-4-4-1-7.500l6.500-5.500z" />
  </svg>
);

export default function App() {
  return (
    <div className="relative flex h-screen flex-col overflow-hidden bg-[#f5f5f5] font-['Noto_Sans','Noto_Sans_CJK_KR',sans-serif]">
      <Defs />
      <TitleBar />
      <div className="flex min-h-0 flex-1 gap-[3px] pr-[5px] pb-[2px] pl-[6px]">
        <SidePanel />
        <main className="relative flex min-w-0 flex-1 flex-col rounded-[12px] bg-[#eaeaea]">
          <div className="relative z-10 grid h-[71px] shrink-0 grid-cols-[1fr_auto_1fr] items-start pt-[6px]">
            <div className="pt-[6px]"><ToolsButton /></div>
            <EditBar />
            <FileBar />
          </div>
          <div className="flex min-h-0 flex-1 justify-center overflow-hidden rounded-b-[12px] pr-[3px]">
            <article className="relative w-[1189px] shrink-0 bg-white font-['Liberation_Sans',sans-serif] text-black shadow-[0_0_8px_rgba(0,0,0,0.12)]">
              <h1 className="pt-[56px] pb-[53px] text-center text-[45px] leading-[56px] font-bold">Decreased Cardiac Output Nursing Care Plan</h1>
              <CarePlanTable />
              {/* Backing of the age label, peeking out below the format bar */}
              <span className="absolute top-[260px] left-[857px] h-[5px] w-[63px] border-l border-[#e8e3c8] bg-white" />
              <FormatBar />
              <DateOfBirth />
              <Frame className="top-[187px] left-[456px] h-[129px] w-[510px]" />
            </article>
          </div>
          <PageBar />
        </main>
      </div>
      <ToolMenu />
      <Arrows />
    </div>
  );
}
